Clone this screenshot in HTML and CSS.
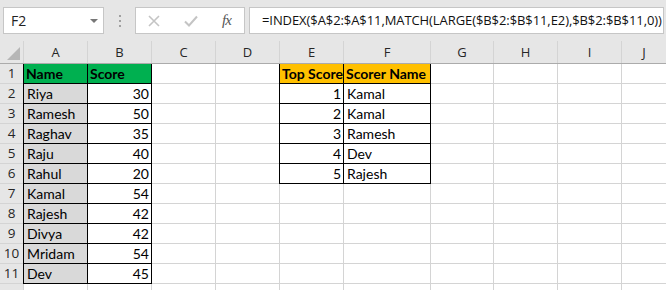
FILE: index.html
```html
<!DOCTYPE html>
<html>
<head lang="en">
    <meta charset="UTF-8">
    <title>Top Score</title>
    <link rel="stylesheet" href="styles.css">
</head>
<body>
<div id="toolbar">
    <div class="namebox">
        <span class="ref">F2</span>
        <span class="drop"></span>
    </div>
    <div class="dots"><i></i><i></i><i></i></div>
    <div class="fxbox">
        <svg width="14" height="14" viewBox="0 0 14 14"><path d="M2 2 L12 12 M12 2 L2 12" stroke="#c4c4c4" stroke-width="1.6" fill="none"/></svg>
        <svg width="16" height="14" viewBox="0 0 16 14"><path d="M2 7.5 L6 11.5 L14 2.5" stroke="#c4c4c4" stroke-width="2" fill="none"/></svg>
        <span class="fx">fx</span>
    </div>
    <div class="formula">=INDEX($A$2:$A$11,MATCH(LARGE($B$2:$B$11,E2),$B$2:$B$11,0))</div>
</div>
<div id="colhead">
    <div class="corner"><span></span></div>
    <div>A</div><div>B</div><div>C</div><div>D</div><div>E</div>
    <div>F</div><div>G</div><div>H</div><div>I</div><div>J</div>
</div>
<div id="sheet">
    <div class="rh">1</div><div class="bd green b">Name</div><div class="bd green b">Score</div><div></div><div></div><div class="bd orange b">Top Score</div><div class="bd orange b">Scorer Name</div><div></div><div></div><div></div><div></div>
    <div class="rh">2</div><div class="bd grey">Riya</div><div class="bd num">30</div><div></div><div></div><div class="bd num">1</div><div class="bd">Kamal</div><div></div><div></div><div></div><div></div>
    <div class="rh">3</div><div class="bd grey">Ramesh</div><div class="bd num">50</div><div></div><div></div><div class="bd num">2</div><div class="bd">Kamal</div><div></div><div></div><div></div><div></div>
    <div class="rh">4</div><div class="bd grey">Raghav</div><div class="bd num">35</div><div></div><div></div><div class="bd num">3</div><div class="bd">Ramesh</div><div></div><div></div><div></div><div></div>
    <div class="rh">5</div><div class="bd grey">Raju</div><div class="bd num">40</div><div></div><div></div><div class="bd num">4</div><div class="bd">Dev</div><div></div><div></div><div></div><div></div>
    <div class="rh">6</div><div class="bd grey">Rahul</div><div class="bd num">20</div><div></div><div></div><div class="bd num">5</div><div class="bd">Rajesh</div><div></div><div></div><div></div><div></div>
    <div class="rh">7</div><div class="bd grey">Kamal</div><div class="bd num">54</div><div></div><div></div><div></div><div></div><div></div><div></div><div></div><div></div>
    <div class="rh">8</div><div class="bd grey">Rajesh</div><div class="bd num">42</div><div></div><div></div><div></div><div></div><div></div><div></div><div></div><div></div>
    <div class="rh">9</div><div class="bd grey">Divya</div><div class="bd num">42</div><div></div><div></div><div></div><div></div><div></div><div></div><div></div><div></div>
    <div class="rh">10</div><div class="bd grey">Mridam</div><div class="bd num">54</div><div></div><div></div><div></div><div></div><div></div><div></div><div></div><div></div>
    <div class="rh">11</div><div class="bd grey">Dev</div><div class="bd num">45</div><div></div><div></div><div></div><div></div><div></div><div></div><div></div><div></div>
    <div class="rh"></div><div></div><div></div><div></div><div></div><div></div><div></div><div></div><div></div><div></div><div></div>
</div>
</body>
</html>
```

FILE: styles.css
```css
* {
    margin: 0;
    padding: 0;
    box-sizing: border-box;
}
body {
    width: 666px;
    height: 290px;
    overflow: hidden;
    background: #e6e6e6;
    font-family: "Open Sans", "Noto Sans", sans-serif;
    color: #000;
}
#toolbar {
    height: 41px;
    padding-top: 7px;
    display: flex;
    align-items: flex-start;
}
.namebox {
    width: 101px;
    height: 27px;
    margin-left: 3px;
    background: #fff;
    border: 1px solid #c6c6c6;
    display: flex;
    align-items: center;
    justify-content: space-between;
    padding: 0 5px 0 7px;
}
.ref {
    font-size: 14px;
    color: #222;
}
.drop {
    width: 0;
    height: 0;
    border-left: 4px solid transparent;
    border-right: 4px solid transparent;
    border-top: 4px solid #777;
}
.dots {
    width: 31px;
    height: 27px;
    display: flex;
    flex-direction: column;
    align-items: center;
    justify-content: center;
    gap: 3px;
}
.dots i {
    width: 2px;
    height: 2px;
    background: #a0a0a0;
}
.fxbox {
    width: 110px;
    height: 27px;
    background: #fff;
    border: 1px solid #c6c6c6;
    display: flex;
    align-items: center;
    padding-left: 11px;
    gap: 22px;
}
.fx {
    font-family: "Liberation Serif", serif;
    font-style: italic;
    font-size: 15px;
    color: #555;
    letter-spacing: -1px;
    margin-left: 1px;
}
.formula {
    flex: 1;
    height: 27px;
    margin-left: 4px;
    margin-right: 2px;
    background: #fff;
    border: 1px solid #c6c6c6;
    font-size: 13px;
    letter-spacing: -0.08px;
    line-height: 25px;
    padding-left: 12px;
    white-space: nowrap;
    overflow: hidden;
    color: #111;
}
#colhead, #sheet {
    display: grid;
    grid-template-columns: 23px 63px 63px 63px 63px 63px 86px 62px 63px 63px 1fr;
    column-gap: 1px;
    background: #d4d4d4;
}
#colhead {
    height: 23px;
    border-bottom: 1px solid #ababab;
}
#colhead div {
    background: #e6e6e6;
    font-size: 13px;
    color: #262626;
    text-align: center;
    line-height: 22px;
}
#colhead .corner {
    position: relative;
}
.corner span {
    position: absolute;
    right: 3px;
    bottom: 3px;
    width: 0;
    height: 0;
    border-left: 13px solid transparent;
    border-bottom: 13px solid #b6b6b6;
}
#sheet {
    height: 226px;
    overflow: hidden;
    grid-auto-rows: 19px;
    row-gap: 1px;
}
#sheet div {
    background: #fff;
    font-family: Lato, "Liberation Sans", sans-serif;
    font-size: 14px;
    line-height: 19px;
    padding: 0 3px;
    white-space: nowrap;
    overflow: visible;
}
#sheet .rh {
    background: #e6e6e6;
    font-family: "Open Sans", "Noto Sans", sans-serif;
    font-size: 13.5px;
    color: #262626;
    text-align: center;
    padding: 0;
}
#sheet .bd {
    box-shadow: 0 0 0 1px #000;
}
#sheet .green {
    background: #00b050;
}
#sheet .orange {
    background: #ffc000;
}
#sheet .grey {
    background: #d9d9d9;
}
#sheet .b {
    font-weight: bold;
    padding-left: 2px;
}
#sheet .num {
    text-align: right;
    padding-right: 2px;
}
```
